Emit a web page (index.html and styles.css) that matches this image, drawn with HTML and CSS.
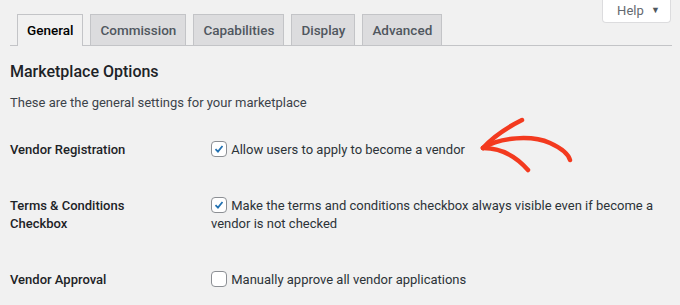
FILE: index.html
```html
<!DOCTYPE html>
<html lang="en">
<head>
  <meta charset="UTF-8" />
  <title>Marketplace Settings</title>
  <link rel="stylesheet" href="styles.css">
</head>
<body>
  <div class="wrap">
    <button class="help-tab" type="button">Help <span class="caret">&#9660;</span></button>

    <nav class="nav-tabs">
      <a href="#" class="nav-tab active">General</a>
      <a href="#" class="nav-tab">Commission</a>
      <a href="#" class="nav-tab">Capabilities</a>
      <a href="#" class="nav-tab">Display</a>
      <a href="#" class="nav-tab">Advanced</a>
    </nav>

    <h2 class="section-title">Marketplace Options</h2>
    <p class="section-desc">These are the general settings for your marketplace</p>

    <table class="form-table">
      <tr>
        <th>Vendor Registration</th>
        <td>
          <label><input type="checkbox" checked> Allow users to apply to become a vendor</label>
        </td>
      </tr>
      <tr>
        <th>Terms &amp; Conditions Checkbox</th>
        <td>
          <label><input type="checkbox" checked> Make the terms and conditions checkbox always visible even if become a vendor is not checked</label>
        </td>
      </tr>
      <tr>
        <th>Vendor Approval</th>
        <td>
          <label><input type="checkbox"> Manually approve all vendor applications</label>
        </td>
      </tr>
    </table>

    <!-- hand drawn arrow pointing at the first option -->
    <svg class="arrow" width="110" height="70" viewBox="0 0 110 70">
      <path d="M13 38 C 30 27, 62 25, 80 33 C 91 38, 98 43, 100 50" />
      <path d="M13 38 C 22 28, 36 18, 52 10" />
      <path d="M13 38 C 28 38, 44 44, 58 60" />
    </svg>
  </div>
</body>
</html>
```

FILE: styles.css
```css
body {
  margin: 0;
  background: #f1f1f1;
  font-family: Roboto, "Noto Sans", sans-serif;
  font-size: 13px;
  color: #1d2327;
}

.wrap {
  position: relative;
  padding: 14px 8px 0 10px;
}

.help-tab {
  position: absolute;
  top: -1px;
  right: 9px;
  width: 69px;
  height: 24px;
  padding: 0 0 0 4px;
  background: #fff;
  border: 1px solid #dcdcde;
  border-top: none;
  border-radius: 0 0 4px 4px;
  font-family: inherit;
  font-size: 13px;
  color: #646970;
}

.help-tab .caret {
  font-size: 9px;
  margin-left: 4px;
  vertical-align: 2px;
  color: #50575e;
}

.nav-tabs {
  display: flex;
  gap: 7px;
  padding-left: 7px;
  border-bottom: 1px solid #c3c4c7;
  height: 31px;
}

.nav-tab {
  display: block;
  height: 30px;
  line-height: 30px;
  padding: 0 9px;
  background: #dcdcde;
  border: 1px solid #c3c4c7;
  border-bottom: none;
  color: #50575e;
  font-size: 13.5px;
  font-weight: 500;
  text-decoration: none;
}

.nav-tab.active {
  background: #f1f1f1;
  color: #000;
  height: 31px;
}

.section-title {
  margin: 16px 0 0;
  font-size: 16px;
  font-weight: 500;
  line-height: 20px;
}

.section-desc {
  margin: 12px 0 0;
  line-height: 18px;
  color: #3c434a;
}

.form-table {
  border-collapse: collapse;
  margin-top: 10px;
  width: 662px;
}

.form-table th {
  width: 150px;
  padding: 19px 51px 19px 0;
  text-align: left;
  vertical-align: top;
  font-weight: 500;
  line-height: 18px;
}

.form-table td {
  padding: 19px 0;
  vertical-align: top;
  line-height: 18px;
  color: #2c3338;
}

.form-table input[type="checkbox"] {
  appearance: none;
  width: 16px;
  height: 16px;
  margin: 0 1px 0 0;
  border: 1px solid #8c8f94;
  border-radius: 4px;
  background: #fff;
  vertical-align: -3px;
}

.form-table input[type="checkbox"]:checked {
  background: #fff url("data:image/svg+xml,%3Csvg xmlns='http://www.w3.org/2000/svg' viewBox='0 0 16 16'%3E%3Cpath d='M4 8.2 L6.8 11 L12 4.5' fill='none' stroke='%232271b1' stroke-width='2'/%3E%3C/svg%3E") no-repeat center / 14px 14px;
}

.arrow {
  position: absolute;
  left: 470px;
  top: 110px;
}

.arrow path {
  fill: none;
  stroke: #f33a1f;
  stroke-width: 4.5;
  stroke-linecap: round;
}
```
